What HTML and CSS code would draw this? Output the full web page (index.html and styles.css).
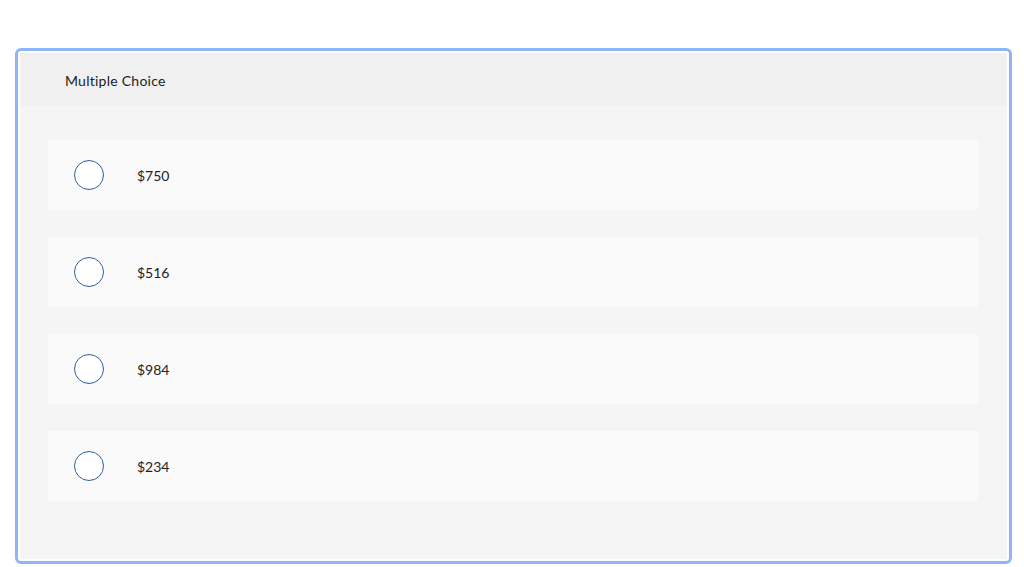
FILE: index.html
```html
<!DOCTYPE html>
<html>
<head>
<meta charset="utf-8">
<link rel="stylesheet" href="styles.css">
</head>
<body>
<div class="question">
  <div class="inner">
    <div class="header">Multiple Choice</div>
    <div class="options">
      <div class="option"><span class="radio"></span><span class="label">$750</span></div>
      <div class="option"><span class="radio"></span><span class="label">$516</span></div>
      <div class="option"><span class="radio"></span><span class="label">$984</span></div>
      <div class="option"><span class="radio"></span><span class="label">$234</span></div>
    </div>
  </div>
</div>
</body>
</html>
```
FILE: styles.css
```css
html, body {
  margin: 0;
  padding: 0;
  background: #ffffff;
}
body {
  font-family: Lato, "Liberation Sans", sans-serif;
  color: #222222;
  padding: 48px 12px 0 15px;
}
.question {
  width: 997px;
  height: 516px;
  box-sizing: border-box;
  border: 3px solid #8fb5f7;
  border-radius: 6px;
  padding: 2px;
  background: #ffffff;
}
.inner {
  height: 100%;
  background: #f5f5f5;
  display: flex;
  flex-direction: column;
}
.header {
  height: 53px;
  background: #f0f0f0;
  display: flex;
  align-items: center;
  padding-left: 45px;
  font-size: 14px;
  letter-spacing: 0.25px;
  padding-top: 1px;
  box-sizing: border-box;
}
.options {
  padding: 34px 29px 0 28px;
  display: flex;
  flex-direction: column;
  gap: 27px;
}
.option {
  height: 70px;
  background: #fafafa;
  display: flex;
  align-items: center;
  padding-left: 26px;
}
.radio {
  width: 30px;
  height: 30px;
  box-sizing: border-box;
  border: 1.5px solid #2f5f9e;
  border-radius: 50%;
  background: #ffffff;
  flex: none;
}
.label {
  margin-left: 33px;
  font-size: 14px;
}
```
